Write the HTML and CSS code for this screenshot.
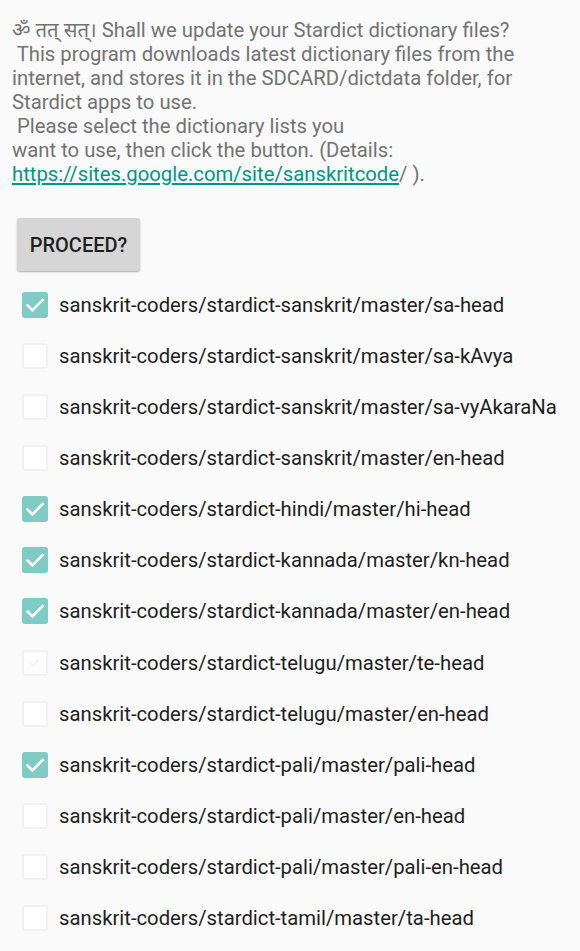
FILE: index.html
```html
<!DOCTYPE html>
<html>
<head>
<meta charset="utf-8">
<link rel="stylesheet" href="styles.css">
</head>
<body>
<div class="intro"><div class="line">ॐ तत् सत्। Shall we update your Stardict dictionary files?</div><div class="line"> This program downloads latest dictionary files from the</div><div class="line">internet, and stores it in the SDCARD/dictdata folder, for</div><div class="line">Stardict apps to use.</div><div class="line"> Please select the dictionary lists you</div><div class="line">want to use, then click the button. (Details: </div><div class="line"><a class="link" href="#">https://sites.google.com/site/sanskritcode</a>/ ).</div></div>
<div class="btn-wrap"><button class="btn">PROCEED?</button></div>
<ul class="list">
<li class="row"><span class="box on"><svg viewBox="0 0 26 26"><path d="M5.5 13.5l5 5 10-10.5" /></svg></span><span class="label">sanskrit-coders/stardict-sanskrit/master/sa-head</span></li>
<li class="row"><span class="box"></span><span class="label">sanskrit-coders/stardict-sanskrit/master/sa-kAvya</span></li>
<li class="row"><span class="box"></span><span class="label">sanskrit-coders/stardict-sanskrit/master/sa-vyAkaraNa</span></li>
<li class="row"><span class="box"></span><span class="label">sanskrit-coders/stardict-sanskrit/master/en-head</span></li>
<li class="row"><span class="box on"><svg viewBox="0 0 26 26"><path d="M5.5 13.5l5 5 10-10.5" /></svg></span><span class="label">sanskrit-coders/stardict-hindi/master/hi-head</span></li>
<li class="row"><span class="box on"><svg viewBox="0 0 26 26"><path d="M5.5 13.5l5 5 10-10.5" /></svg></span><span class="label">sanskrit-coders/stardict-kannada/master/kn-head</span></li>
<li class="row"><span class="box on"><svg viewBox="0 0 26 26"><path d="M5.5 13.5l5 5 10-10.5" /></svg></span><span class="label">sanskrit-coders/stardict-kannada/master/en-head</span></li>
<li class="row"><span class="box faint"><svg viewBox="0 0 26 26"><path d="M8 13.5l3 3 6-6.5" /></svg></span><span class="label">sanskrit-coders/stardict-telugu/master/te-head</span></li>
<li class="row"><span class="box"></span><span class="label">sanskrit-coders/stardict-telugu/master/en-head</span></li>
<li class="row"><span class="box on"><svg viewBox="0 0 26 26"><path d="M5.5 13.5l5 5 10-10.5" /></svg></span><span class="label">sanskrit-coders/stardict-pali/master/pali-head</span></li>
<li class="row"><span class="box"></span><span class="label">sanskrit-coders/stardict-pali/master/en-head</span></li>
<li class="row"><span class="box"></span><span class="label">sanskrit-coders/stardict-pali/master/pali-en-head</span></li>
<li class="row"><span class="box"></span><span class="label">sanskrit-coders/stardict-tamil/master/ta-head</span></li>
</ul>
</body>
</html>
```
FILE: styles.css
```css
html, body {
  margin: 0;
  padding: 0;
  background: #fafafa;
}
body {
  font-family: Roboto, "Noto Sans", "DejaVu Sans", sans-serif;
  width: 580px;
  height: 951px;
  overflow: hidden;
}
.intro {
  padding: 18px 0 0 12px;
  font-size: 20.3px;
  line-height: 24px;
  color: #737373;
}
.line {
  white-space: pre;
}
.link {
  color: #009688;
  text-decoration: underline;
}
.btn-wrap {
  padding: 32px 0 0 17px;
}
.btn {
  font-family: Roboto, sans-serif;
  font-size: 20px;
  font-weight: 500;
  color: #1f1f1f;
  background: #d6d6d6;
  border: none;
  border-radius: 3px;
  width: 123px;
  height: 53px;
  box-shadow: 0 1px 2px rgba(0,0,0,0.22), 0 1px 1px rgba(0,0,0,0.1);
  padding: 0;
}
.list {
  list-style: none;
  margin: 0;
  padding: 8px 0 0 0;
}
.row {
  display: flex;
  align-items: center;
  height: 51.15px;
}
.box {
  box-sizing: border-box;
  width: 26px;
  height: 26px;
  margin-left: 22px;
  margin-right: 11px;
  border-radius: 3px;
  border: 2px solid #f1f1f1;
  background: #fefefe;
  flex: none;
  display: flex;
}
.box svg {
  width: 100%;
  height: 100%;
}
.box.on {
  background: #80cbc4;
  border-color: #80cbc4;
}
.box.on svg {
  width: 26px;
  height: 26px;
  margin: -2px;
}
.box path {
  fill: none;
  stroke: #fff;
  stroke-width: 2.6;
  stroke-linecap: square;
}
.box.faint path {
  stroke: #f0f0f0;
  stroke-width: 1.5;
}
.label {
  font-size: 20.3px;
  color: #1e1e1e;
  white-space: nowrap;
}
```
